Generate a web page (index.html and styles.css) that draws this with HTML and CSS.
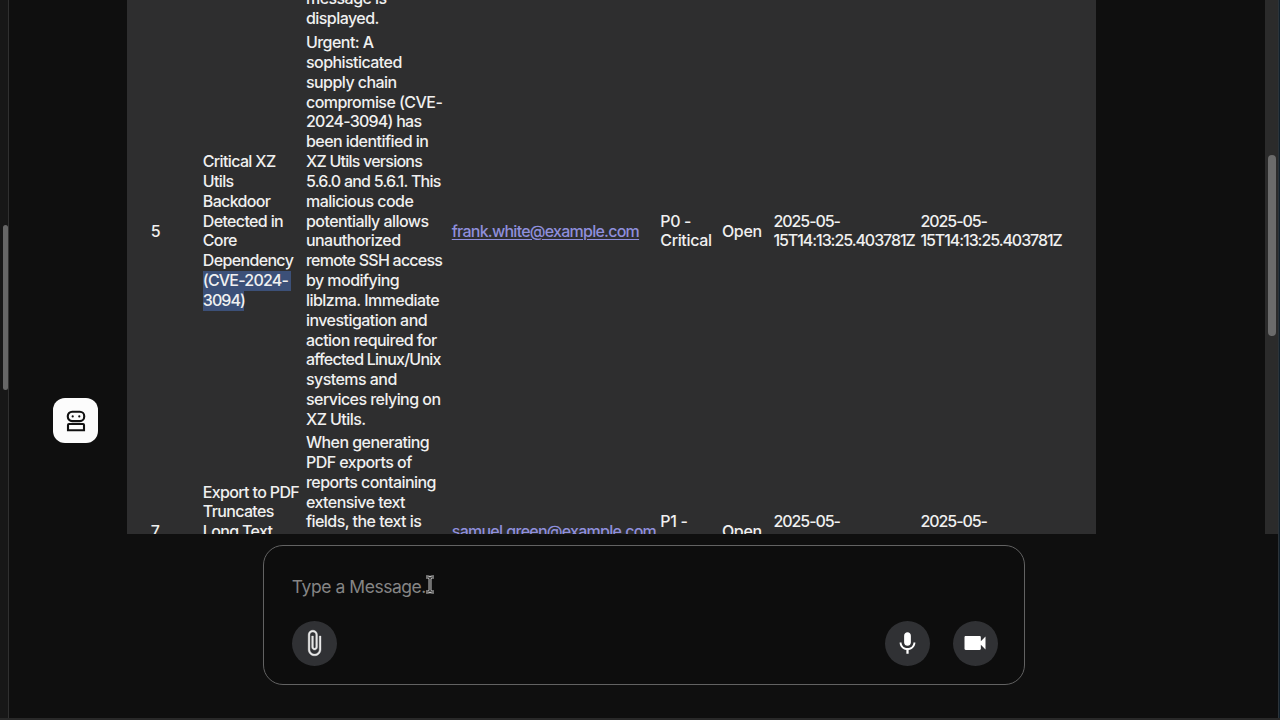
FILE: index.html
```html
<!DOCTYPE html>
<html lang="en">
<head>
<meta charset="utf-8">
<title>Ticket assistant</title>
<link rel="stylesheet" href="styles.css">
</head>
<body>
<div class="app">
  <aside class="side"><div class="side-thumb"></div></aside>
  <div class="main">
    <section class="chat">
      <div class="avatar">
        <svg width="20" height="22" viewBox="0 0 20 22" fill="none" stroke="#111" stroke-width="2.1">
          <rect x="1.8" y="1.7" width="16.4" height="9.4" rx="4.3"/>
          <path d="M2 20.200v-5.200q0-1 1-1h14q1 0 1 1v5.200z"/>
          <circle cx="6.700" cy="6.400" r="1.100" fill="#111" stroke="none"/>
          <circle cx="13.300" cy="6.400" r="1.100" fill="#111" stroke="none"/>
        </svg>
      </div>
      <div class="tickets">
        <div class="row row-prev"><div class="desc">message is<br>displayed.</div></div>
        <div class="row">
          <div class="id">5</div>
          <div class="title">Critical XZ<br>Utils<br>Backdoor<br>Detected in<br>Core<br>Dependency<br><mark>(CVE-2024-</mark><br><mark class="end">3094)</mark></div>
          <div class="desc">Urgent: A<br>sophisticated<br>supply chain<br>compromise (CVE-<br><span class="tight">2024-3094) has</span><br>been identified in<br><span class="tight">XZ Utils versions</span><br><span class="tight">5.6.0 and 5.6.1. This</span><br>malicious code<br>potentially allows<br>unauthorized<br><span class="tight">remote SSH access</span><br>by modifying<br>liblzma. Immediate<br>investigation and<br>action required for<br><span class="tight">affected Linux/Unix</span><br>systems and<br>services relying on<br>XZ Utils.</div>
          <div class="mail"><a>frank.white@example.com</a></div>
          <div class="prio">P0 -<br>Critical</div>
          <div class="status">Open</div>
          <div class="time">2025-05-<br>15T14:13:25.403781Z</div>
          <div class="time">2025-05-<br>15T14:13:25.403781Z</div>
        </div>
        <div class="row row-next">
          <div class="id">7</div>
          <div class="title">Export to PDF<br>Truncates<br>Long Text</div>
          <div class="desc">When generating<br>PDF exports of<br>reports containing<br>extensive text<br>fields, the text is</div>
          <div class="mail"><a>samuel.green@example.com</a></div>
          <div class="prio">P1 -</div>
          <div class="status">Open</div>
          <div class="time">2025-05-</div>
          <div class="time">2025-05-</div>
        </div>
      </div>
      <div class="track"><div class="thumb"></div></div>
    </section>
    <form class="composer">
      <div class="prompt">Type a Message..
        <svg class="cursor" width="10" height="19" viewBox="0 0 10 19" fill="none"><path d="M1 2h2q2 0 2 2q0-2 2-2h2M5 4v11M1 17h2q2 0 2-2q0 2 2 2h2" stroke="#c4c4c4" stroke-width="3"/><path d="M1 2h2q2 0 2 2q0-2 2-2h2M5 4v11M1 17h2q2 0 2-2q0 2 2 2h2" stroke="#222" stroke-width="1"/></svg>
      </div>
      <div class="actions">
        <span class="btn"><svg width="28" height="28" viewBox="0 0 24 24" fill="#e8e8e8" stroke="#e8e8e8" stroke-width=".3"><path d="M16.500 6v11.500c0 2.210-1.790 4-4 4s-4-1.790-4-4V5c0-1.380 1.120-2.500 2.500-2.500s2.500 1.120 2.500 2.500v10.500c0 .55-.45 1-1 1s-1-.45-1-1V6H10v9.500c0 1.380 1.120 2.500 2.500 2.500s2.500-1.120 2.500-2.500V5c0-2.210-1.790-4-4-4S7 2.790 7 5v12.500c0 3.040 2.460 5.500 5.500 5.500s5.500-2.460 5.500-5.500V6h-1.500z"/></svg></span>
        <span class="btn mic"><svg width="27" height="27" viewBox="0 0 24 24" fill="#fff"><path d="M12 14c1.660 0 3-1.340 3-3V5c0-1.660-1.340-3-3-3S9 3.340 9 5v6c0 1.660 1.340 3 3 3zM17.300 11c0 3-2.540 5.100-5.300 5.100S6.700 14 6.700 11H5c0 3.410 2.720 6.230 6 6.720V21h2v-3.280c3.280-.48 6-3.300 6-6.720h-1.700z"/></svg></span>
        <span class="btn"><svg width="28" height="28" viewBox="0 0 24 24" fill="#fff"><path d="M17 10.500V7c0-.55-.45-1-1-1H4c-.55 0-1 .45-1 1v10c0 .55.45 1 1 1h12c.55 0 1-.45 1-1v-3.500l4 4v-11l-4 4z"/></svg></span>
      </div>
    </form>
  </div>
  <div class="edge"></div>
</div>
</body>
</html>
```
FILE: styles.css
```css
* { box-sizing: border-box; }
body { margin: 0; background: #0f0f0f; color: #f0f0f0; font: 500 16px/19.84px Inter, "Liberation Sans", sans-serif; letter-spacing: -0.35px; }
.app { display: flex; width: 1280px; height: 720px; overflow: hidden; border-bottom: 2px solid #292929; }
.side { width: 9px; padding: 225px 1px 0 3px; background: #171717; border-right: 1px solid #303030; flex: none; }
.side-thumb { width: 5px; height: 165px; border-radius: 3px; background: #666; }
.main { flex: 1; display: flex; flex-direction: column; }
.chat { display: flex; height: 534px; }
.avatar { display: flex; align-items: center; justify-content: center; width: 45px; height: 45px; margin: 398px 28.600px 0 44.400px; border-radius: 12px; background: #fcfcfc; flex: none; }
.tickets { width: 969px; height: 534px; overflow: hidden; background: #2e2e2f; flex: none; }
.row { display: grid; grid-template-columns: 58px 103.200px 145.800px 208.500px 61.700px 51.500px 147px 150px; padding-left: 17.800px; align-items: center; white-space: nowrap; height: 396.800px; margin-bottom: 3.200px; }
.row-prev { height: 28.800px; margin-bottom: 4.200px; align-content: end; }
.row-prev .desc { grid-column: 3; }
.row-next { height: 198.400px; align-items: start; }
.row-next .id, .row-next .mail, .row-next .status { padding-top: 89.280px; }
.row-next .title { padding-top: 49.600px; }
.row-next .prio, .row-next .time { padding-top: 79.360px; }
.id { padding-left: 6px; }
.title { letter-spacing: -0.65px; }
.desc { letter-spacing: -0.55px; }
.tight { letter-spacing: -0.76px; }
.mail { letter-spacing: -0.75px; }
.time { letter-spacing: -1.06px; }
mark { display: inline-block; height: 19.840px; vertical-align: top; width: 88px; letter-spacing: -0.8px; background: #3c5078; color: inherit; }
.end { width: 41px; letter-spacing: -0.9px; }
.mail a { color: #8f8fdc; text-decoration: underline; text-decoration-thickness: 1px; text-underline-offset: 2px; }
.track { width: 13px; height: 534px; margin-left: auto; padding: 155px 0 0 3px; background: #2b2b2b; }
.thumb { width: 8px; height: 181px; border-radius: 4px; background: #6b6b6b; }
.edge { width: 2px; background: #10202c; border-left: 1px solid #2c343a; flex: none; }
.composer { width: 762px; height: 140px; margin: 10.500px 0 0 253.500px; padding: 30px 26px 0 28.300px; border: 1.500px solid #626262; border-radius: 20px; background: #0d0d0d; }
.prompt { position: relative; height: 22px; font-size: 17.5px; font-weight: 400; line-height: 22px; letter-spacing: -0.45px; color: #858585; }
.cursor { position: absolute; left: 133.500px; top: -1px; }
.actions { display: flex; gap: 22.500px; margin-top: 23px; }
.btn { display: flex; align-items: center; justify-content: center; width: 45px; height: 45px; border-radius: 50%; background: #303134; }
.mic { margin-left: auto; }
```
